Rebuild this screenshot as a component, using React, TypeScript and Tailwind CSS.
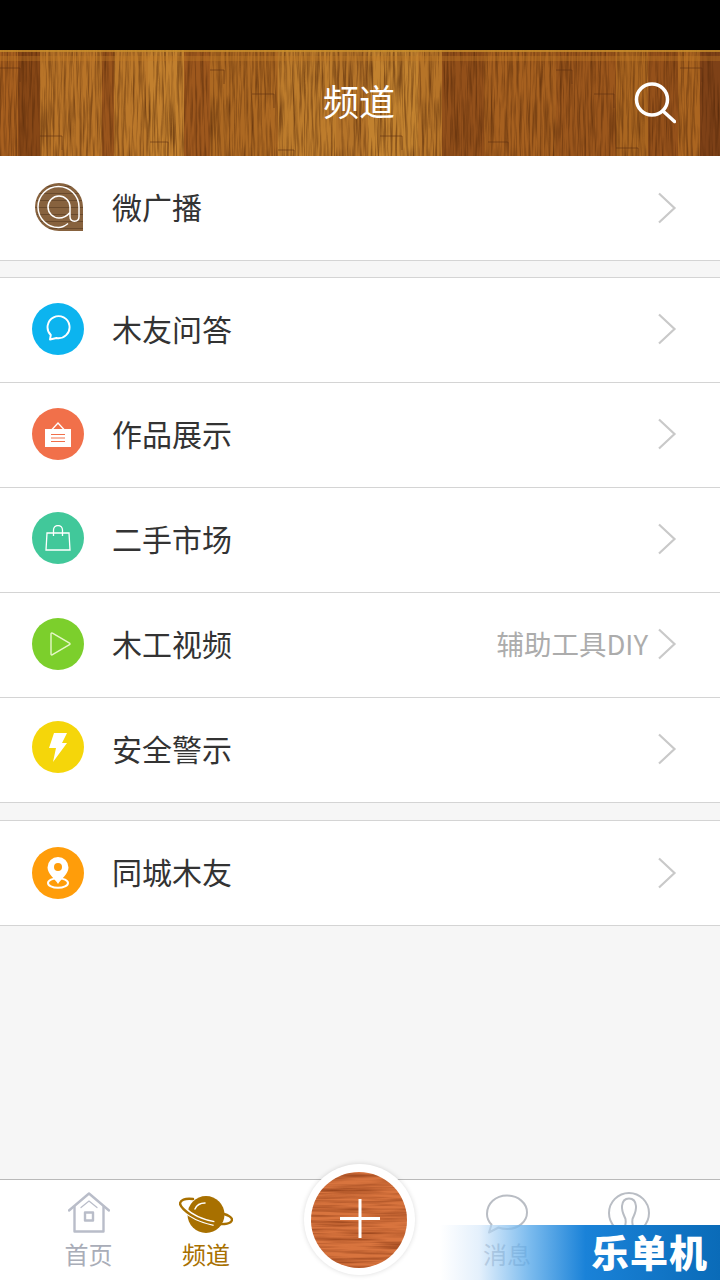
import React from "react";

const planks: [number, number, string][] = [
  [0, 18, "#a8601f"], [18, 22, "#874716"], [40, 62, "#b87428"], [102, 12, "#9a551c"], [114, 34, "#bb782a"],
  [148, 36, "#c2802e"], [184, 26, "#9e581d"], [210, 68, "#ad6922"], [278, 58, "#bd7c2c"], [336, 32, "#b57429"],
  [368, 50, "#c2822f"], [418, 24, "#b67428"], [442, 42, "#93501a"], [484, 72, "#a6601f"], [556, 60, "#9c571c"],
  [616, 32, "#aa6620"], [648, 30, "#95511a"], [678, 22, "#ab6520"], [700, 20, "#7e4117"],
];

const marks: [number, number, number][] = [
  [0, 68, 20], [40, 136, 22], [150, 142, 18], [252, 94, 22], [278, 150, 16], [380, 136, 22], [488, 142, 20],
  [594, 94, 20], [616, 148, 22], [680, 68, 22], [556, 70, 16], [210, 70, 14],
];

function WoodHeader() {
  return (
    <svg className="absolute inset-0 w-full h-full" viewBox="0 50 720 106" preserveAspectRatio="none" aria-hidden="true">
      <defs>
        <filter id="grain" x="0" y="0" width="100%" height="100%" colorInterpolationFilters="sRGB">
          <feTurbulence type="fractalNoise" baseFrequency="0.45 0.02" numOctaves="3" seed="7" />
          <feColorMatrix type="matrix" values="0 0 0 0 0.32  0 0 0 0 0.15  0 0 0 0 0.03  1.500 0 0 0 -0.600" />
        </filter>
      </defs>
      {planks.map(([x, w, c]) => (
        <rect key={x} x={x} y={50} width={w} height={106} fill={c} />
      ))}
      <rect x={0} y={50} width={720} height={106} filter="url(#grain)" />
      <rect x={0} y={50} width={720} height={2} fill="#c8902c" opacity={0.8} />
      <rect x={0} y={56} width={720} height={5} fill="#c67d24" opacity={0.35} />
      {marks.map(([x, y, w]) => (
        <path key={`${x}-${y}`} d={`M${x} ${y}h${w}v14`} stroke="#5e3110" strokeWidth={1} fill="none" opacity={0.6} />
      ))}
    </svg>
  );
}

function Chevron() {
  return (
    <svg width="20" height="32" viewBox="0 0 20 32" fill="none" className="shrink-0">
      <path d="M2 1.500 L17.500 16 L2 30.500" stroke="#c9c9c9" strokeWidth="2.200" />
    </svg>
  );
}

function AtIcon() {
  return (
    <svg width="48" height="48" viewBox="0 0 48 48">
      <defs>
        <pattern id="atwood" width="48" height="7" patternUnits="userSpaceOnUse">
          <rect width="48" height="7" fill="#87623e" />
          <rect y="3" width="48" height="1" fill="#6a4a2c" />
        </pattern>
      </defs>
      <path d="M24 0a24 24 0 0 1 24 24v24H24a24 24 0 0 1 0-48z" fill="url(#atwood)" />
      <path
        d="M33 40.500C29.500 43.400 26.500 44.500 23.500 44.500A20.500 20.500 0 1 1 44 24v9.500c0 3-2 4.700-4.500 4.700S35 36.500 35 33.500V24A11 11 0 1 0 24 35c4 0 8-2 11-5.500"
        fill="none"
        stroke="#fff"
        strokeWidth="1.500"
      />
    </svg>
  );
}

function Circle({ color, children }: { color: string; children: React.ReactNode }) {
  return (
    <div className={`w-[52px] h-[52px] rounded-full flex items-center justify-center shrink-0 ${color}`}>
      {children}
    </div>
  );
}

function Bubble() {
  return (
    <svg width="26" height="28" viewBox="0 0 26 28" fill="none">
      <path d="M5 24.500 5.800 20A11 11 0 1 1 11.500 23z" stroke="#fff" strokeWidth="1.900" strokeLinejoin="round" />
    </svg>
  );
}
function Sign() {
  return (
    <svg width="26" height="25" viewBox="0 0 26 25">
      <path d="M7 7.500 13 1l6 6.500" fill="none" stroke="#fff" strokeWidth="1.300" />
      <rect y="7" width="26" height="18" fill="#fff" />
      <path d="M6 12.500h14M6 16h14M6 19.500h14" stroke="#f1704a" strokeWidth="1.200" />
    </svg>
  );
}
function Bag() {
  return (
    <svg width="26" height="26" viewBox="0 0 26 26" fill="none" stroke="#fff" strokeWidth="1.300">
      <path d="M2 8h22l1 17H1z" />
      <path d="M8.500 11V5a4.500 4.500 0 0 1 9 0v6" />
    </svg>
  );
}
function Play() {
  return (
    <svg width="22" height="24" viewBox="0 0 22 24" fill="none" className="translate-x-[2px]">
      <path d="M2 2c0-1 .7-1.300 1.500-.8l17 10c.7.400.7 1.100 0 1.500l-17 10c-.8.500-1.500.2-1.500-.8z" stroke="#e6f7c9" strokeWidth="1.400" />
    </svg>
  );
}
function Bolt() {
  return (
    <svg width="18" height="29" viewBox="0 0 18 29">
      <path d="M5 0h13l-5 10h5L4 29l3-14H0z" fill="#fff" />
    </svg>
  );
}
function Pin() {
  return (
    <svg width="24" height="32" viewBox="0 0 24 32">
      <ellipse cx="12" cy="26" rx="10" ry="4.800" fill="none" stroke="#fff" strokeWidth="2" />
      <path d="M12 0a10.500 10.500 0 0 1 10.500 10.500C22.500 17 15 22 12 27 9 22 1.500 17 1.500 10.500A10.500 10.500 0 0 1 12 0z" fill="#fff" />
      <circle cx="12" cy="10" r="4" fill="#ff9d0a" />
    </svg>
  );
}

type RowProps = {
  icon: React.ReactNode;
  label: string;
  sub?: string;
  iconShift?: string;
  chevShift?: string;
};

function Row({ icon, label, sub, iconShift = "", chevShift = "" }: RowProps) {
  return (
    <div className="h-[105px] bg-white border-b border-[#d4d4d4] flex items-center pl-[32px] pr-[43px]">
      <div className={`w-[52px] flex justify-center shrink-0 ${iconShift}`}>{icon}</div>
      <span className="ml-[28px] text-[30px] leading-none text-[#333333] flex-1 font-normal -translate-y-[2px]">{label}</span>
      {sub && <span className="text-[27.5px] leading-none text-[#acacac] mr-[9px] font-normal -translate-y-[1px]">{sub}</span>}
      <div className={chevShift}><Chevron /></div>
    </div>
  );
}

function HomeIcon() {
  return (
    <svg width="42" height="42" viewBox="0 0 42 42" fill="none" stroke="#b9bdc9" strokeWidth="2.400" strokeLinejoin="round" strokeLinecap="round">
      <path d="M1 18.500 21 1.500l20 17" />
      <path d="M6.500 15v24.500h29V15" />
      <path d="M13 15.500l8-6.500 8 6.500" strokeWidth="1.200" />
      <rect x="17" y="20.500" width="8" height="8" />
    </svg>
  );
}

function PlanetIcon() {
  return (
    <svg width="54" height="38" viewBox="0 0 54 38" fill="none">
      <circle cx="27" cy="18.500" r="18.500" fill="#a87000" />
      <path d="M16 13c1.500-3.500 5-6 10-6" stroke="#fff" strokeWidth="1.500" strokeLinecap="round" />
      <path d="M6 14C12 20 23 25 35 27.500" stroke="#fff" strokeWidth="5" />
      <path d="M14 3C6 2 1 4 1 8c2 6 15 16 34 19.500 11 1.500 18 0 18-4 0-2-4-4.500-8-5.500" stroke="#a87000" strokeWidth="2.400" strokeLinecap="round" />
    </svg>
  );
}

function ChatIcon() {
  return (
    <svg width="42" height="40" viewBox="0 0 42 40" fill="none">
      <path d="M3 38.500 5.500 30.500C2.500 27.500 1 24 1 20 1 9.500 9.500 1.500 21 1.500S41 9.500 41 18.500 32.500 35 21 35c-3.500 0-6-.5-8.500-1.500z" stroke="#b9bdc4" strokeWidth="2" strokeLinejoin="round" />
    </svg>
  );
}

function MeIcon() {
  return (
    <svg width="42" height="42" viewBox="0 0 42 42" fill="none" stroke="#b9bdc4" strokeWidth="2">
      <circle cx="21" cy="21" r="20" />
      <path d="M14 41c3-5 4.500-9 3.500-14-1-3-4-7-3.500-13 .5-5 3.500-7.500 7-7.500s6.500 2.500 7 7.500c.5 6-2.500 10-3.500 13-1 5 .5 9 3.500 14" />
    </svg>
  );
}

function PlusButton() {
  return (
    <div className="w-[111px] h-[111px] rounded-full bg-white shadow-[0_0_5px_rgba(0,0,0,0.14)] flex items-center justify-center">
      <svg width="96" height="96" viewBox="0 0 96 96" className="-translate-x-[1px]">
        <defs>
          <filter id="pgrain" x="0" y="0" width="100%" height="100%" colorInterpolationFilters="sRGB">
            <feTurbulence type="fractalNoise" baseFrequency="0.015 0.35" numOctaves="3" seed="3" />
            <feColorMatrix type="matrix" values="0 0 0 0 0.55  0 0 0 0 0.23  0 0 0 0 0.08  1.500 0 0 0 -0.550" />
          </filter>
          <clipPath id="pclip">
            <circle cx="48" cy="48" r="48" />
          </clipPath>
        </defs>
        <g clipPath="url(#pclip)">
          <rect width="96" height="96" fill="#d8743e" />
          <rect width="96" height="96" filter="url(#pgrain)" />
        </g>
        <path d="M29 46.500h40M49 27v39" stroke="#fff" strokeWidth="3" />
      </svg>
    </div>
  );
}

function Tab({ width, icon, label, active }: { width: string; icon: React.ReactNode; label?: string; active?: boolean }) {
  return (
    <div className={`${width} flex flex-col items-center`}>
      <div className="h-[42px] flex items-end justify-center">{icon}</div>
      {label && (
        <span className={`mt-[5px] text-[24px] leading-[30px] font-normal ${active ? "text-[#a87000]" : "text-[#a9adb8]"}`}>{label}</span>
      )}
    </div>
  );
}

export default function App() {
  return (
    <div
      className="relative w-[720px] h-[1280px] overflow-hidden bg-[#f6f6f6] flex flex-col"
      style={{ fontFamily: '"Noto Sans CJK SC", "Noto Sans", sans-serif' }}
    >
      <div className="h-[50px] bg-black shrink-0" />

      <header className="relative h-[106px] shrink-0 flex items-center justify-center">
        <WoodHeader />
        <h1 className="relative text-[36px] leading-none font-normal text-white -translate-x-[1px] -translate-y-[3px]">频道</h1>
        <svg className="absolute right-[44px] top-[32px]" width="42" height="42" viewBox="0 0 42 42" fill="none" stroke="#fff" strokeWidth="3.500">
          <circle cx="18" cy="17.500" r="15.500" />
          <path d="M29 29 40.500 39.500" strokeLinecap="round" />
        </svg>
      </header>

      <Row icon={<AtIcon />} label="微广播" iconShift="translate-x-[1px] -translate-y-[1px]" />

      <div className="h-[16px] shrink-0" />

      <div className="border-t border-[#d4d4d4]">
        <Row icon={<Circle color="bg-[#0cb4ef]"><Bubble /></Circle>} label="木友问答" iconShift="-translate-y-[1px]" chevShift="-translate-y-[1px]" />
        <Row icon={<Circle color="bg-[#f1704a]"><Sign /></Circle>} label="作品展示" iconShift="-translate-y-[1px]" chevShift="-translate-y-[1px]" />
        <Row icon={<Circle color="bg-[#41c89a]"><Bag /></Circle>} label="二手市场" iconShift="-translate-y-[2px]" chevShift="-translate-y-[1px]" />
        <Row icon={<Circle color="bg-[#7ccf2c]"><Play /></Circle>} label="木工视频" sub="辅助工具DIY" iconShift="-translate-y-[1px]" chevShift="-translate-y-[1px]" />
        <Row icon={<Circle color="bg-[#f5d60a]"><Bolt /></Circle>} label="安全警示" iconShift="-translate-y-[3px]" chevShift="-translate-y-[1px]" />
      </div>

      <div className="h-[17px] shrink-0" />

      <div className="border-t border-[#d4d4d4]">
        <Row icon={<Circle color="bg-[#ff9d0a]"><Pin /></Circle>} label="同城木友" />
      </div>

      <div className="flex-1" />

      <nav className="h-[101px] shrink-0 bg-white border-t border-[#b9b9b9] flex items-start pl-[30px] pt-[12px]">
        <Tab width="w-[117px]" icon={<HomeIcon />} label="首页" />
        <Tab width="w-[118px]" icon={<PlanetIcon />} label="频道" active />
        <div className="w-[187px]" />
        <Tab width="w-[110px]" icon={<ChatIcon />} label="消息" />
        <Tab width="w-[134px]" icon={<MeIcon />} />
      </nav>

      <div className="absolute left-[304px] top-[1164px]">
        <PlusButton />
      </div>

      <div className="absolute left-[440px] top-[1225px] w-[280px] h-[55px] bg-[linear-gradient(90deg,rgba(255,255,255,0)_0%,rgba(210,230,250,0.6)_14%,rgba(100,175,235,0.85)_32%,#1a82d8_52%,#0a6bb8_100%)] flex items-center justify-end pr-[12px]">
        <span className="text-[38px] leading-none font-black text-white tracking-[1px] -translate-y-[2px]">乐单机</span>
      </div>
    </div>
  );
}
